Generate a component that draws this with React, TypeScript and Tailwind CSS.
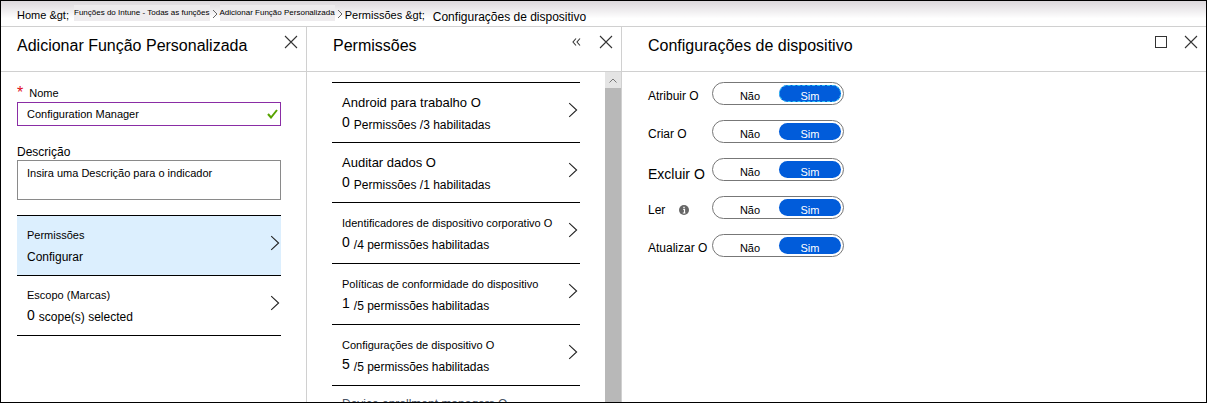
import React from "react";

type Permission = { title: string; titleClass: string; count: string; rest: string; rowClass: string };

const permissions: Permission[] = [
  { title: "Android para trabalho O", titleClass: "text-[13px] leading-5", count: "0", rest: "Permissões /3 habilitadas", rowClass: "h-[60px]" },
  { title: "Auditar dados O", titleClass: "text-[13px] leading-5", count: "0", rest: "Permissões /1 habilitadas", rowClass: "h-[60px]" },
  { title: "Identificadores de dispositivo corporativo O", titleClass: "text-[11px] leading-5", count: "0", rest: "/4 permissões habilitadas", rowClass: "h-[61px]" },
  { title: "Políticas de conformidade do dispositivo", titleClass: "text-[11px] leading-5", count: "1", rest: "/5 permissões habilitadas", rowClass: "h-[61px]" },
  { title: "Configurações de dispositivo O", titleClass: "text-[11px] leading-5", count: "5", rest: "/5 permissões habilitadas", rowClass: "h-[61px]" },
  { title: "Device enrollment managers O", titleClass: "text-xs leading-4 text-gray-600", count: "0", rest: "/5 permissões habilitadas", rowClass: "h-[61px]" },
];

const settings = [
  { name: "Atribuir O", size: "text-xs", focused: true, info: false },
  { name: "Criar O", size: "text-xs", focused: false, info: false },
  { name: "Excluir O", size: "text-sm", focused: false, info: false },
  { name: "Ler", size: "text-xs", focused: false, info: true },
  { name: "Atualizar O", size: "text-xs", focused: false, info: false },
];

function Chevron() {
  return (
    <svg className="h-4 w-[10px] shrink-0" viewBox="0 0 10 16" fill="none" stroke="#222" strokeWidth="1.1" aria-hidden="true">
      <path d="M1.2 1.2 8.6 8 1.2 14.8" />
    </svg>
  );
}

function CrumbChevron() {
  return (
    <svg className="mx-[2px] mt-2 h-[10px] w-[6px]" viewBox="0 0 6 10" fill="none" stroke="#666" aria-hidden="true">
      <path d="M1 1 5 5 1 9" />
    </svg>
  );
}

function CloseButton() {
  return (
    <button type="button" aria-label="Fechar" className="flex size-4 items-center justify-center">
      <svg className="size-[14px]" viewBox="0 0 14 14" fill="none" stroke="#333" strokeWidth="1.1" aria-hidden="true">
        <path d="M1 1 13 13M13 1 1 13" />
      </svg>
    </button>
  );
}

function PanelHeader({ title, children }: { title: string; children: React.ReactNode }) {
  return (
    <header className="flex h-[45px] shrink-0 items-start border-b border-[#d0d0d0] pr-[7px] pt-[7px]">
      <h2 className="flex-1 text-base leading-6">{title}</h2>
      {children}
    </header>
  );
}

function Toggle({ name, focused }: { name: string; focused: boolean }) {
  return (
    <div role="radiogroup" aria-label={name} className="flex h-[23px] w-[132px] rounded-full border border-[#777] p-[2px] text-[11px] leading-[22px]">
      <label className="flex flex-1 justify-center rounded-full pl-[6px]">
        <input type="radio" name={name} className="sr-only" />
        Não
      </label>
      <label
        className={
          focused
            ? "flex w-[62px] justify-center rounded-full bg-[#015cda] text-white outline-1 -outline-offset-1 outline-dashed outline-[#2fc4f5]"
            : "flex w-[62px] justify-center rounded-full bg-[#015cda] text-white"
        }
      >
        <input type="radio" name={name} defaultChecked className="sr-only" />
        Sim
      </label>
    </div>
  );
}

export default function App() {
  return (
    <div className="flex h-screen flex-col overflow-hidden border border-black bg-white font-['Liberation_Sans',Arial,sans-serif] text-black">
      <nav className="flex h-[26px] shrink-0 items-start border-b border-[#d0d0d0] bg-linear-to-b from-[#dcd8dc] to-white to-70% pl-4 leading-4">
        <a href="#home" className="mt-[6px] w-[57px] text-[11px]">Home &amp;gt;</a>
        <a href="#funcoes" className="mt-1 bg-[#eeecee] text-[8px]">Funções do Intune - Todas as funções</a>
        <CrumbChevron />
        <a href="#adicionar" className="mt-1 bg-[#eeecee] text-[8px]">Adicionar Função Personalizada</a>
        <CrumbChevron />
        <a href="#permissoes" className="mr-2 mt-[6px] text-[11px]">Permissões &amp;gt;</a>
        <span className="mt-2 text-xs leading-4">Configurações de dispositivo</span>
      </nav>

      <div className="flex min-h-0 flex-1">
        <section className="flex w-[306px] shrink-0 flex-col border-r border-[#d0d0d0]">
          <div className="[&>header]:pl-4">
            <PanelHeader title="Adicionar Função Personalizada">
              <CloseButton />
            </PanelHeader>
          </div>
          <form className="flex flex-col pl-4 pr-[25px] pt-3">
            <label htmlFor="nome" className="flex h-[18px] gap-[6px] text-[11px] leading-[18px]">
              <span className="text-base leading-[18px] text-[#e00b1c]">*</span>
              Nome
            </label>
            <div className="flex h-6 items-center border border-[#8a2da5] pl-[9px] pr-[2px]">
              <input id="nome" defaultValue="Configuration Manager" className="min-w-0 flex-1 text-[11px] outline-none" />
              <svg className="h-[10px] w-[11px]" viewBox="0 0 11 10" fill="none" stroke="#57a300" strokeWidth="2" aria-hidden="true">
                <path d="M1 5 4 8.5 10 1" />
              </svg>
            </div>
            <label htmlFor="descricao" className="mt-[18px] text-xs leading-4">Descrição</label>
            <textarea
              id="descricao"
              defaultValue="Insira uma Descrição para o indicador"
              className="h-10 resize-none overflow-hidden border border-[#8a8a8a] px-[9px] py-1 text-[11px] leading-4 outline-none"
            />
            <button type="button" className="mt-[15px] flex h-[61px] items-center border-y border-black bg-[#dceffe] pl-[10px] pr-px text-left">
              <span className="flex flex-1 flex-col gap-1 leading-[18px]">
                <span className="text-[11px]">Permissões</span>
                <span className="text-xs leading-[18px]">Configurar</span>
              </span>
              <span className="pb-[6px]">
                <Chevron />
              </span>
            </button>
            <button type="button" className="flex h-[60px] items-center border-b border-black pl-[10px] pr-px text-left">
              <span className="flex flex-1 flex-col gap-1 leading-[18px]">
                <span className="text-[11px]">Escopo (Marcas)</span>
                <span className="flex gap-1 text-xs leading-[18px]">
                  <span className="text-sm leading-[14px]">0</span>scope(s) selected
                </span>
              </span>
              <span className="pb-[6px]">
                <Chevron />
              </span>
            </button>
          </form>
        </section>

        <section className="flex w-[315px] shrink-0 flex-col border-r border-[#d0d0d0]">
          <div className="[&>header]:pl-[26px]">
            <PanelHeader title="Permissões">
              <button type="button" aria-label="Recolher" className="mr-[14px] flex size-4 items-center justify-center">
                <svg className="h-2 w-[9px]" viewBox="0 0 9 8" fill="none" stroke="#333" strokeWidth="1.1" aria-hidden="true">
                  <path d="M4 .5 1 4 4 7.500M8 .5 5 4 8 7.500" />
                </svg>
              </button>
              <CloseButton />
            </PanelHeader>
          </div>
          <div className="flex min-h-0 flex-1">
            <ul className="flex-1 overflow-hidden px-[25px] pt-[10px]">
              {permissions.map((p) => (
                <li key={p.title}>
                  <button type="button" className={`flex w-full items-start border-t border-black pl-[10px] pr-[2px] pt-[10px] text-left ${p.rowClass}`}>
                    <span className="flex min-w-0 flex-1 flex-col gap-[2px]">
                      <span className={`whitespace-nowrap ${p.titleClass}`}>{p.title}</span>
                      <span className="flex gap-1 text-xs leading-5">
                        <span className="text-sm leading-[14px]">{p.count}</span>
                        {p.rest}
                      </span>
                    </span>
                    <span className="pt-[9px]">
                      <Chevron />
                    </span>
                  </button>
                </li>
              ))}
            </ul>
            <div className="w-4 shrink-0 bg-[#b8b8b8]">
              <button type="button" aria-label="Rolar para cima" className="flex h-4 w-full items-center justify-center bg-[#e4e4e4]">
                <svg className="h-[5px] w-2" viewBox="0 0 8 5" fill="none" stroke="#777" aria-hidden="true">
                  <path d="M.5 4.500 4 1 7.500 4.500" />
                </svg>
              </button>
            </div>
          </div>
        </section>

        <section className="flex min-w-0 flex-1 flex-col">
          <div className="[&>header]:pl-[26px]">
            <PanelHeader title="Configurações de dispositivo">
              <button type="button" aria-label="Maximizar" className="mr-[14px] flex size-4 items-center justify-center">
                <span className="size-3 border border-[#333]" />
              </button>
              <CloseButton />
            </PanelHeader>
          </div>
          <div className="flex flex-col gap-[15px] pl-[26px] pt-[10px]">
            {settings.map((s) => (
              <div key={s.name} className="flex h-[23px] items-start">
                <span className="flex w-16 shrink-0 items-center gap-[14px] whitespace-nowrap pt-[6px]">
                  <span className={s.size}>{s.name}</span>
                  {s.info && (
                    <svg className="size-[10px]" viewBox="0 0 10 10" aria-hidden="true">
                      <circle cx="5" cy="5" r="5" fill="#666" />
                      <path d="M4.200 4.300h1.300v3.700M3.800 8h2.600M4.300 2.300h1.400" stroke="#fff" strokeWidth="1.2" fill="none" />
                    </svg>
                  )}
                </span>
                <Toggle name={s.name} focused={s.focused} />
              </div>
            ))}
          </div>
        </section>
      </div>
    </div>
  );
}
